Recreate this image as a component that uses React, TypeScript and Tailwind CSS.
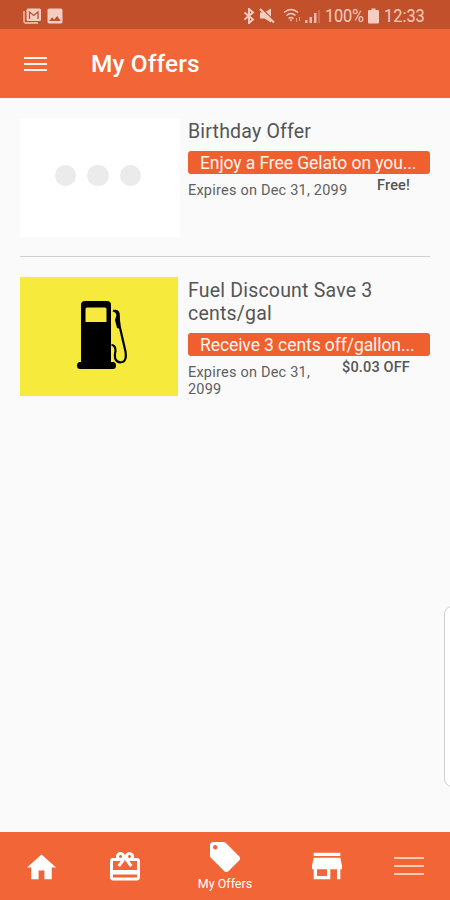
import React from 'react';
import { MdHome, MdImage, MdLocalOffer, MdRedeem, MdStore } from 'react-icons/md';

interface Offer {
  title: string;
  banner: string;
  expires: string;
  value: string;
  image: 'placeholder' | 'fuel';
}

const offers: Offer[] = [
  {
    title: 'Birthday Offer',
    banner: 'Enjoy a Free Gelato on you...',
    expires: 'Expires on Dec 31, 2099',
    value: 'Free!',
    image: 'placeholder',
  },
  {
    title: 'Fuel Discount Save 3 cents/gal',
    banner: 'Receive 3 cents off/gallon...',
    expires: 'Expires on Dec 31, 2099',
    value: '$0.03 OFF',
    image: 'fuel',
  },
];

const StatusBar = () => (
  <div className="flex h-[29px] items-center justify-between bg-[#c1502b] pt-[2px] pl-[23px] pr-[25px] text-[#f7cdbf]">
    <div className="flex items-center gap-[5px]">
      {/* mail notification */}
      <svg width="19" height="16" viewBox="0 0 19 16" fill="none">
        <path d="M1 3v10.5Q1 15 2.500 15H15" stroke="currentColor" strokeWidth="1.300" />
        <rect x="3.500" y="0.500" width="14.500" height="12.500" rx="1.500" fill="currentColor" />
        <path d="M6.500 11V4l4.300 3.500L15 4v7" stroke="#c1502b" strokeWidth="1.300" />
      </svg>
      <MdImage className="h-[20px] w-[20px] -ml-[2px]" />
    </div>
    <div className="flex items-center">
      <svg width="12" height="16" viewBox="0 0 12 16" fill="none">
        <path d="M1.500 4.500l8.500 7L6 15V1l4 3.500-8.500 7" stroke="currentColor" strokeWidth="1.900" />
      </svg>
      <svg className="ml-[4px]" width="16" height="16" viewBox="0 0 16 16" fill="none">
        <path d="M1 4.500h4.500L12 0.500v14L5.500 10.500H1z" fill="currentColor" />
        <path d="M3 0.500l13 13" stroke="#c1502b" strokeWidth="1.200" />
        <path d="M1 1l14 13.500" stroke="currentColor" strokeWidth="2" />
      </svg>
      <svg className="ml-[8px]" width="42" height="18" viewBox="0 0 42 18" fill="none">
        <path d="M1 5.500Q8 -0.500 15 5.500M3.500 8.500Q8 4.500 12.500 8.500M5.500 11.500Q8 9.500 10.500 11.500" stroke="currentColor" strokeWidth="1.500" />
        <path d="M6.500 12.500h3L8 14.500z" fill="currentColor" />
        <path d="M13.500 11v4M16.500 10v4" stroke="currentColor" strokeWidth="1" opacity="0.6" />
        <path d="M22 13h2.500v3H22zM26.500 10H29v6h-2.500zM31 6h2.500v10H31z" fill="currentColor" opacity="0.850" />
        <path d="M36 3v13" stroke="currentColor" strokeWidth="1" opacity="0.500" />
      </svg>
      <span className="w-[38px] origin-left scale-x-[0.91] text-[18px] leading-none tracking-[-0.2px]">100%</span>
      <svg className="ml-[5px] mr-[5px]" width="11" height="16" viewBox="0 0 11 16">
        <path d="M3.500 0.500h4v1.500H10q1 0 1 1v11.500q0 1-1 1H1q-1 0-1-1V3q0-1 1-1h2.500z" fill="currentColor" />
      </svg>
      <span className="w-[41px] origin-left scale-x-[0.91] text-[18px] leading-none">12:33</span>
    </div>
  </div>
);

const AppBar = () => (
  <header className="flex h-[69px] items-center bg-[#f26536] pt-px pl-[24px] text-white">
    <button className="flex w-[23px] flex-col gap-[4px]" aria-label="Menu">
      <span className="h-[2px] w-full bg-[#fff1ec]" />
      <span className="h-[2px] w-full bg-[#fff1ec]" />
      <span className="h-[2px] w-full bg-[#fff1ec]" />
    </button>
    <h1 className="ml-[44px] pt-px text-[24.500px] font-medium leading-none tracking-[0.1px]">My Offers</h1>
  </header>
);

const FuelPump = () => (
  <svg width="52" height="70" viewBox="0 0 52 70" fill="none">
    <path
      fill="#000"
      fillRule="evenodd"
      d="M8 1h22q4 0 4 4v57h2q3 0 3 3.500T36 69H3q-3 0-3-3.500T3 62h1V5q0-4 4-4zM10 7.500q-1.500 0-1.500 1.500v13h21V9q0-1.500-1.500-1.500z"
    />
    <path d="M36 10.500l5 2 1.500 13 6 26q1.500 9-3 10.500-5.500 1.500-7.500-4-.5-4 .5-7 0-6-4-6" stroke="#000" strokeWidth="2.200" />
    <path d="M37 10q4-1 5.500 3l1 16-3.500-1-2-8 1.500-5z" fill="#000" />
  </svg>
);

const OfferImage = ({ image }: { image: Offer['image'] }) => {
  if (image === 'fuel') {
    return (
      <div className="flex h-[119px] w-[158px] shrink-0 items-center justify-center bg-[#f6eb3d] pb-[3px] pl-[8px]">
        <FuelPump />
      </div>
    );
  }
  return (
    <div className="flex h-[119px] w-[160px] shrink-0 items-center justify-center gap-[11px] bg-white pr-[4px] pb-[5px]">
      <span className="h-[21px] w-[21.500px] rounded-full bg-[#ebebeb]" />
      <span className="h-[21px] w-[21.500px] rounded-full bg-[#ebebeb]" />
      <span className="h-[21px] w-[21.500px] rounded-full bg-[#ebebeb]" />
    </div>
  );
};

const OfferRow = ({ offer }: { offer: Offer }) => (
  <article className="flex h-[119px] justify-between">
    <OfferImage image={offer.image} />
    <div className="w-[242px]">
      <h2 className="pt-[2px] text-[19.500px] leading-[23px] tracking-[0.2px] text-[#555]">{offer.title}</h2>
      <div className="mt-[8px] h-[23px] whitespace-nowrap rounded-[3px] bg-[#f0602e] pl-[12px] text-[17.500px] leading-[25px] tracking-[-0.08px] text-[#fff4f0]">
        {offer.banner}
      </div>
      <div className="flex items-start justify-between gap-[8px] pr-[20px]">
        <p className="pt-[8px] text-[14.500px] leading-[17px] tracking-[0.22px] text-[#606060]">{offer.expires}</p>
        <p className="shrink-0 pt-[3px] text-[14.500px] font-medium leading-[18px] tracking-[0.15px] text-[#555]">{offer.value}</p>
      </div>
    </div>
  </article>
);

const BottomNav = () => (
  <nav className="flex h-[68px] bg-[#f26536] text-white">
    <div className="flex w-[83px] items-center justify-center pt-[2px]">
      <MdHome className="h-[35px] w-[35px]" />
    </div>
    <div className="flex w-[83px] items-center justify-center pt-px">
      <MdRedeem className="h-[36px] w-[36px]" />
    </div>
    <div className="flex w-[118px] flex-col items-center pt-[7px]">
      <MdLocalOffer className="h-[36px] w-[36px]" />
      <span className="mt-[2px] text-[12.500px] leading-[14px]">My Offers</span>
    </div>
    <div className="flex w-[84px] items-center justify-center pl-px">
      <MdStore className="h-[40px] w-[40px]" />
    </div>
    <div className="flex w-[82px] flex-col items-center justify-center gap-[6px]">
      <span className="h-[2px] w-[30px] bg-[#fbc9b5]" />
      <span className="h-[2px] w-[30px] bg-[#fbc9b5]" />
      <span className="h-[2px] w-[30px] bg-[#fbc9b5]" />
    </div>
  </nav>
);

export default function App() {
  return (
    <div className="relative flex h-[900px] w-[450px] flex-col overflow-hidden bg-[#fafafa] font-['Roboto',sans-serif]">
      <StatusBar />
      <AppBar />
      <main className="flex-1 px-[20px] pt-[20px]">
        <OfferRow offer={offers[0]} />
        <hr className="mt-[19px] mb-[20px] border-t border-[#d0d0d0]" />
        <OfferRow offer={offers[1]} />
      </main>
      {/* edge panel handle */}
      <div className="absolute top-[606px] left-[444px] h-[181px] w-[16px] rounded-[8px] border border-[#d0d0d0] bg-white" />
      <BottomNav />
    </div>
  );
}
